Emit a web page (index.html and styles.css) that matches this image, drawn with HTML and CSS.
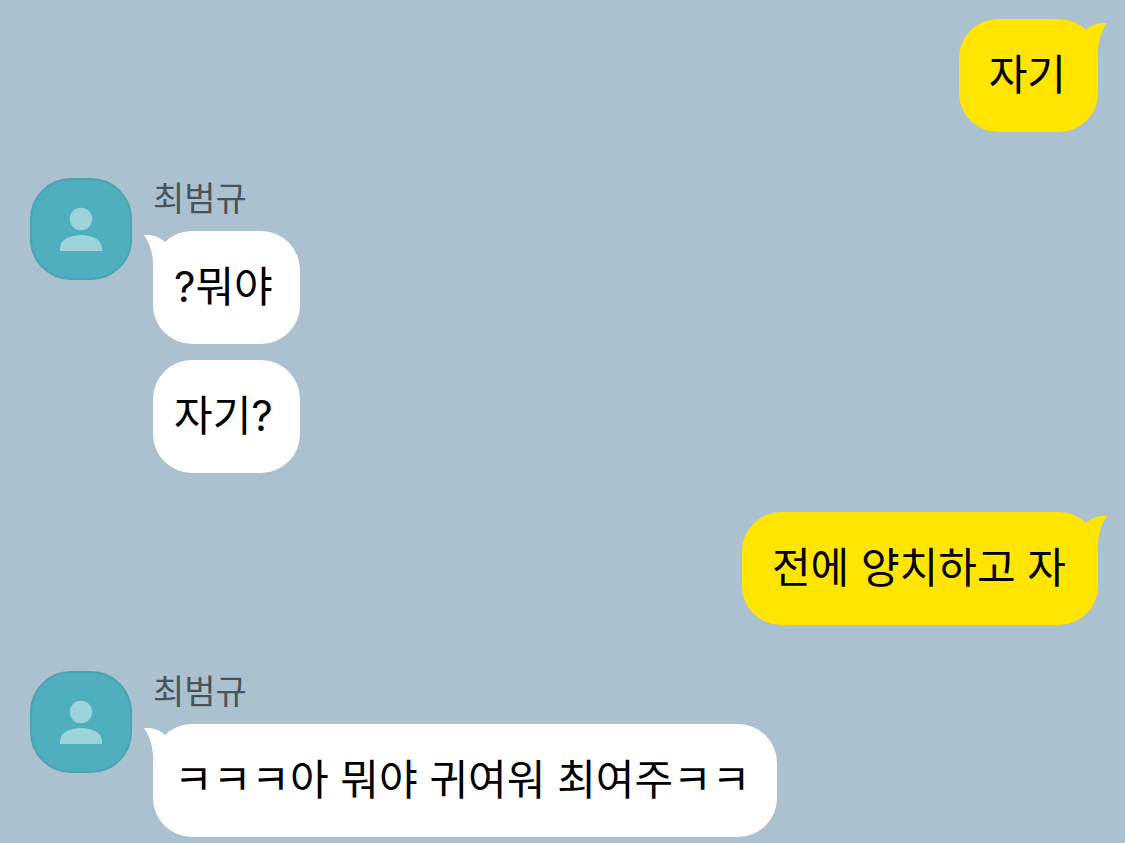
FILE: index.html
```
<!DOCTYPE html>
<html lang="ko">
<head>
  <meta charset="UTF-8">
  <meta name="viewport" content="width=device-width, initial-scale=1.0">
  <title>최범규</title>
  <link rel="stylesheet" href="styles.css">
</head>
<body>
  <main class="chat">
    <div class="message sent">
      <p class="bubble">자기
        <svg class="tail" viewBox="0 0 24 32" aria-hidden="true"><path d="M2 8C8 2.500 14 .8 23 1C19 7 15 14 14 28V32L0 22Z"/></svg>
      </p>
    </div>

    <div class="message received">
      <svg class="avatar" viewBox="0 0 102 102" aria-hidden="true">
        <rect class="avatar-bg" x="1" y="1" width="100" height="100" rx="40"/>
        <circle class="avatar-icon" cx="51" cy="41" r="11.2"/>
        <path class="avatar-icon" d="M30 73V70C30 62 40 57 51 57S72 62 72 70V73Z"/>
      </svg>
      <div class="content">
        <span class="name">최범규</span>
        <p class="bubble">?뭐야
          <svg class="tail" viewBox="0 0 24 32" aria-hidden="true"><path d="M22 8C16 2.500 10 .8 1 1C5 7 9 14 10 28V32L24 22Z"/></svg>
        </p>
        <p class="bubble">자기?</p>
      </div>
    </div>

    <div class="message sent">
      <p class="bubble">전에 양치하고 자
        <svg class="tail" viewBox="0 0 24 32" aria-hidden="true"><path d="M2 8C8 2.500 14 .8 23 1C19 7 15 14 14 28V32L0 22Z"/></svg>
      </p>
    </div>

    <div class="message received">
      <svg class="avatar" viewBox="0 0 102 102" aria-hidden="true">
        <rect class="avatar-bg" x="1" y="1" width="100" height="100" rx="40"/>
        <circle class="avatar-icon" cx="51" cy="41" r="11.2"/>
        <path class="avatar-icon" d="M30 73V70C30 62 40 57 51 57S72 62 72 70V73Z"/>
      </svg>
      <div class="content">
        <span class="name">최범규</span>
        <p class="bubble">ㅋㅋㅋ아 뭐야 귀여워 최여주ㅋㅋ
          <svg class="tail" viewBox="0 0 24 32" aria-hidden="true"><path d="M22 8C16 2.500 10 .8 1 1C5 7 9 14 10 28V32L24 22Z"/></svg>
        </p>
      </div>
    </div>
  </main>
</body>
</html>
```
FILE: styles.css
```
* {
  margin: 0;
  padding: 0;
  box-sizing: border-box;
}

body {
  background-color: #abc1d0;
  color: #000;
  font-family: Inter, "Noto Sans CJK KR", sans-serif;
}

.chat {
  display: flex;
  flex-direction: column;
  padding: 19px 27px 6px 30px;
}

.message {
  display: flex;
}

.sent {
  justify-content: flex-end;
}

.received {
  align-items: flex-start;
  gap: 21px;
}

.sent + .received {
  margin-top: 46px;
}

.received + .sent {
  margin-top: 39px;
}

.avatar {
  flex: none;
  width: 102px;
  height: 102px;
}

.avatar-bg {
  fill: #50afbf;
  stroke: #4ca3b2;
  stroke-width: 2;
}

.avatar-icon {
  fill: #9dd4db;
}

.content {
  display: flex;
  flex-direction: column;
  align-items: flex-start;
}

.name {
  color: #48535c;
  font-size: 34px;
  line-height: 41px;
  margin-bottom: 12px;
}

.bubble {
  position: relative;
  padding: 29px 27px 31px 21px;
  border-radius: 39px;
  background-color: #fff;
  font-size: 42px;
  line-height: 53px;
}

.bubble + .bubble {
  margin-top: 16px;
}

.sent .bubble {
  padding: 29px 32px 31px 30px;
  background-color: #ffe500;
}

.tail {
  position: absolute;
  top: 3px;
  left: -10px;
  width: 24px;
  height: 32px;
  fill: #fff;
}

.sent .tail {
  left: auto;
  right: -10px;
  fill: #ffe500;
}
```
